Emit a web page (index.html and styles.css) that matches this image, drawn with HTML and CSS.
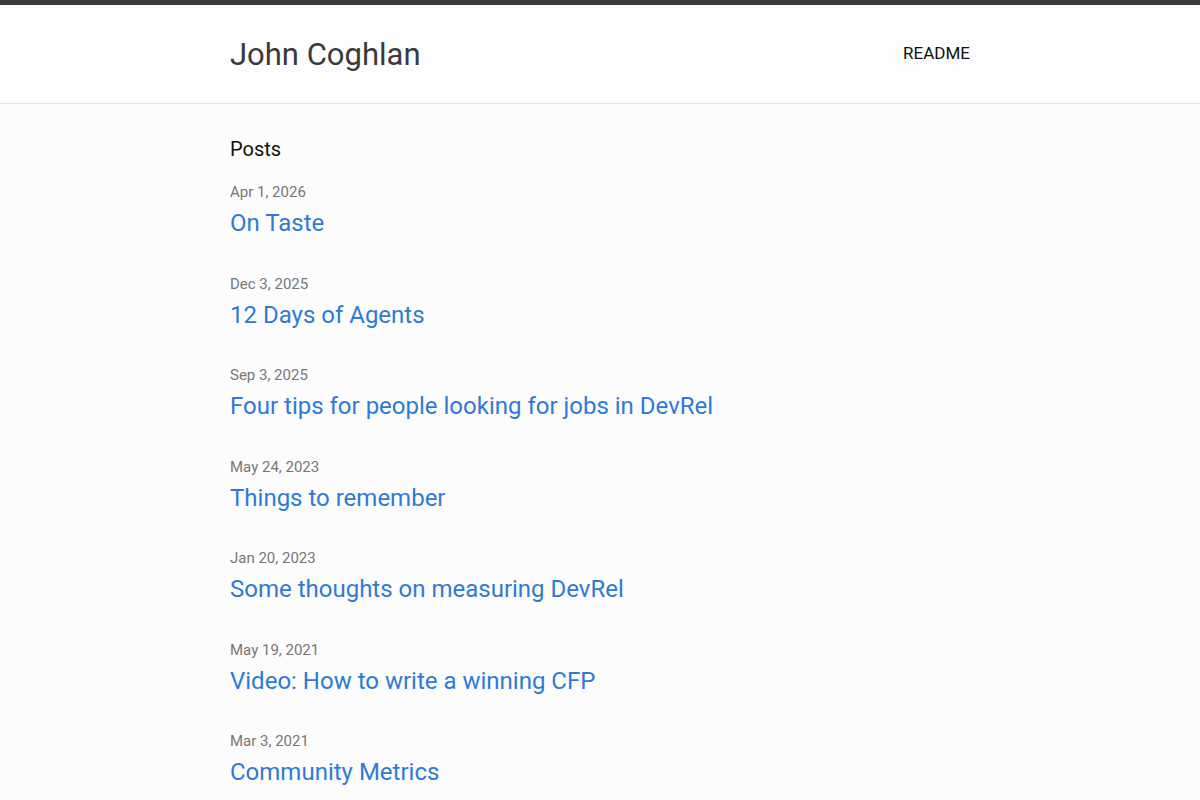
FILE: index.html
```html
<!DOCTYPE html>
<html lang="en">
<head>
<meta charset="utf-8">
<title>John Coghlan</title>
<link rel="stylesheet" href="styles.css">
</head>
<body>
<header class="site-header">
  <div class="wrap header-inner">
    <a class="site-title" href="#">John Coghlan</a>
    <nav class="site-nav"><a href="#">README</a></nav>
  </div>
</header>
<main class="wrap content">
  <h2 class="posts-heading">Posts</h2>
  <ul class="post-list">
    <li class="post"><span class="post-date">Apr 1, 2026</span><a class="post-link" href="#">On Taste</a></li>
    <li class="post"><span class="post-date">Dec 3, 2025</span><a class="post-link" href="#">12 Days of Agents</a></li>
    <li class="post"><span class="post-date">Sep 3, 2025</span><a class="post-link" href="#">Four tips for people looking for jobs in DevRel</a></li>
    <li class="post"><span class="post-date">May 24, 2023</span><a class="post-link" href="#">Things to remember</a></li>
    <li class="post"><span class="post-date">Jan 20, 2023</span><a class="post-link" href="#">Some thoughts on measuring DevRel</a></li>
    <li class="post"><span class="post-date">May 19, 2021</span><a class="post-link" href="#">Video: How to write a winning CFP</a></li>
    <li class="post"><span class="post-date">Mar 3, 2021</span><a class="post-link" href="#">Community Metrics</a></li>
  </ul>
</main>
</body>
</html>
```

FILE: styles.css
```css
html, body {
  margin: 0;
  padding: 0;
}
body {
  font-family: Roboto, "Liberation Sans", sans-serif;
  background: #fcfcfc;
  color: #111;
}
a { text-decoration: none; }
.wrap {
  width: 740px;
  margin: 0 auto;
}
.site-header {
  background: #fdfdfd;
  border-top: 5px solid #3b3b3b;
  border-bottom: 1px solid #e6e6e6;
}
.header-inner {
  height: 98px;
  display: flex;
  align-items: center;
  justify-content: space-between;
}
.site-title {
  margin-top: 2px;
  font-size: 31px;
  color: #3a3a3a;
  line-height: 40px;
  font-weight: 400;
}
.site-nav {
  margin-bottom: 2px;
}
.site-nav a {
  font-size: 17px;
  color: #111;
  line-height: 24px;
}
.content {
  padding-top: 30px;
}
.posts-heading {
  margin: 0 0 18px;
  font-size: 20px;
  font-weight: 400;
  line-height: 30px;
  color: #111;
}
.post-list {
  list-style: none;
  margin: 0;
  padding: 0;
}
.post {
  display: flex;
  flex-direction: column;
  margin-bottom: 32.5px;
}
.post-date {
  font-size: 15px;
  line-height: 20px;
  color: #777;
}
.post-link {
  margin-top: 3px;
  font-size: 24px;
  line-height: 36px;
  color: #2f7ad5;
}
```
